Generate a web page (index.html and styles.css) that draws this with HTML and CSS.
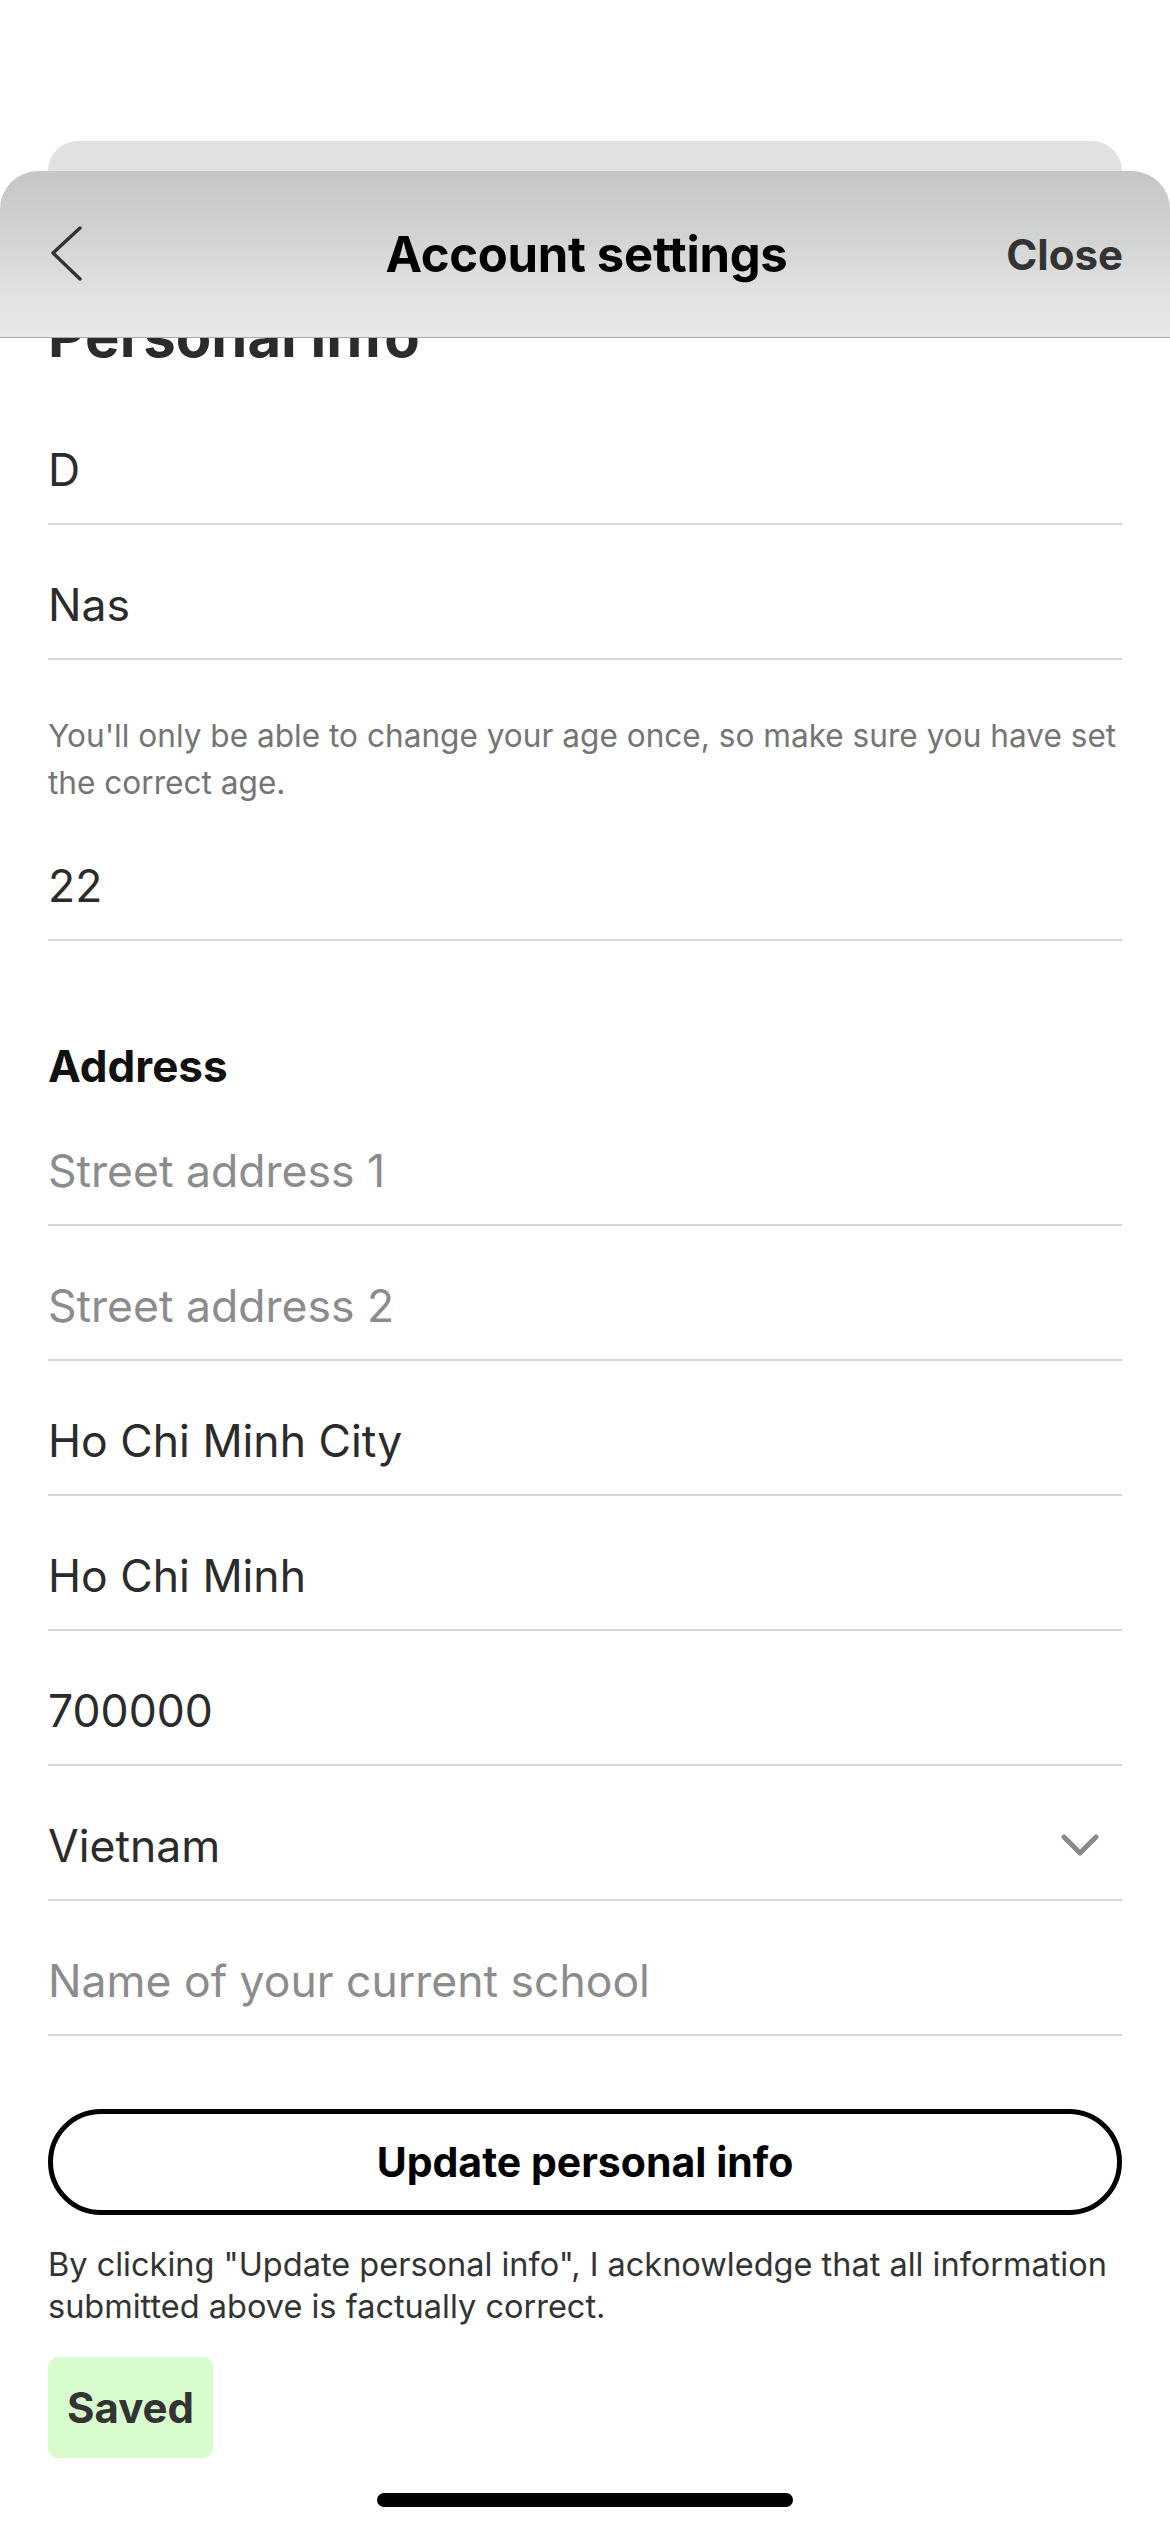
FILE: index.html
```html
<!DOCTYPE html>
<html lang="en">
<head>
  <meta charset="UTF-8">
  <title>Account settings</title>
  <link rel="stylesheet" href="styles.css">
</head>
<body>
<div class="status-bar"></div>
<div class="sheet-back"></div>

<div class="sheet">
  <!-- top bar floats over the scrolled form -->
  <header class="top-bar">
    <a class="back" aria-label="Back">
      <svg width="34" height="58" viewBox="0 0 34 58">
        <polyline points="30,3 3,28 30,54" fill="none" stroke="#333" stroke-width="3.4" stroke-linecap="round" stroke-linejoin="round"/>
      </svg>
    </a>
    <h1>Account settings</h1>
    <a class="close">Close</a>
  </header>

  <main class="content">
    <h2 class="section-title">Personal info</h2>
    <div class="field">D</div>
    <div class="field">Nas</div>
    <p class="hint">You'll only be able to change your age once, so make sure you have set the correct age.</p>
    <div class="field">22</div>

    <!-- Address -->
    <h3 class="group-title">Address</h3>
    <div class="field placeholder">Street address 1</div>
    <div class="field placeholder">Street address 2</div>
    <div class="field">Ho Chi Minh City</div>
    <div class="field">Ho Chi Minh</div>
    <div class="field">700000</div>
    <div class="field select">
      <span>Vietnam</span>
      <svg width="40" height="26" viewBox="0 0 40 26">
        <polyline points="4,4 20,20 36,4" fill="none" stroke="#8a8a8a" stroke-width="5" stroke-linecap="round" stroke-linejoin="round"/>
      </svg>
    </div>
    <div class="field placeholder">Name of your current school</div>

    <button class="btn-outline">Update personal info</button>
    <p class="legal">By clicking "Update personal info", I acknowledge that all information submitted above is factually correct.</p>
    <div class="saved">Saved</div>
  </main>
</div>

<div class="home-indicator"></div>
</body>
</html>
```

FILE: styles.css
```css
body {
    margin: 0;
    width: 1170px;
    height: 2532px;
    overflow: hidden;
    position: relative;
    background: #fff;
    font-family: Inter, 'Liberation Sans', sans-serif;
    color: #2b2b2b;
}
.status-bar { height: 141px; }
.sheet-back {
    height: 30px;
    margin: 0 48px;
    background: #e1e1e1;
    border-radius: 34px 34px 0 0;
}
.sheet {
    position: relative;
    background: #fff;
    border-radius: 38px 38px 0 0;
    overflow: hidden;
}
.top-bar {
    position: absolute;
    top: 0;
    left: 0;
    right: 0;
    z-index: 1;
    height: 167px;
    box-sizing: border-box;
    padding: 0 47px 0 50px;
    border-bottom: 1px solid #a9a9a9;
    background: linear-gradient(180deg, #c6c6c6 0%, #d2d3d3 40%, #e2e2e2 75%, #e8e8e8 100%);
    display: grid;
    grid-template-columns: 1fr auto 1fr;
    align-items: center;
}
.back { display: flex; }
.top-bar h1 {
    margin: 0;
    font-size: 49px;
    font-weight: 700;
    color: #000;
    letter-spacing: -0.3px;
}
.close {
    justify-self: end;
    font-size: 42px;
    font-weight: 700;
    color: #333;
}
.content { padding: 133px 48px 0; }
.section-title {
    margin: 0;
    font-size: 58px;
    line-height: 64px;
    font-weight: 700;
    color: #2b2b2b;
}
.field {
    height: 135px;
    box-sizing: border-box;
    padding-top: 55px;
    font-size: 44.5px;
    line-height: 50px;
    border-bottom: 2px solid #d6d6d6;
}
.section-title + .field { margin-top: 22px; }
.placeholder { color: #8c8c8c; }
.select {
    display: flex;
    justify-content: space-between;
    align-items: flex-start;
}
.select svg { margin: 12px 22px 0 0; }
.hint {
    margin: 52px 0 0;
    font-size: 31.6px;
    line-height: 47px;
    color: #757575;
}
.group-title {
    margin: 100px 0 0;
    font-size: 44px;
    line-height: 50px;
    font-weight: 700;
    color: #111;
}
.btn-outline {
    display: block;
    width: 100%;
    height: 106px;
    margin-top: 73px;
    border: 5px solid #000;
    border-radius: 53px;
    background: #fff;
    font-family: inherit;
    font-size: 41px;
    font-weight: 700;
    color: #000;
}
.legal {
    margin: 29px 0 0;
    font-size: 32.5px;
    line-height: 42px;
    color: #333;
}
.saved {
    display: inline-block;
    margin-top: 29px;
    padding: 0 19px;
    height: 101px;
    line-height: 101px;
    border-radius: 10px;
    background: #d9fccf;
    font-size: 42px;
    font-weight: 700;
    color: #333;
}
.home-indicator {
    position: absolute;
    left: 377px;
    top: 2493px;
    width: 416px;
    height: 14px;
    border-radius: 7px;
    background: #000;
}
```
